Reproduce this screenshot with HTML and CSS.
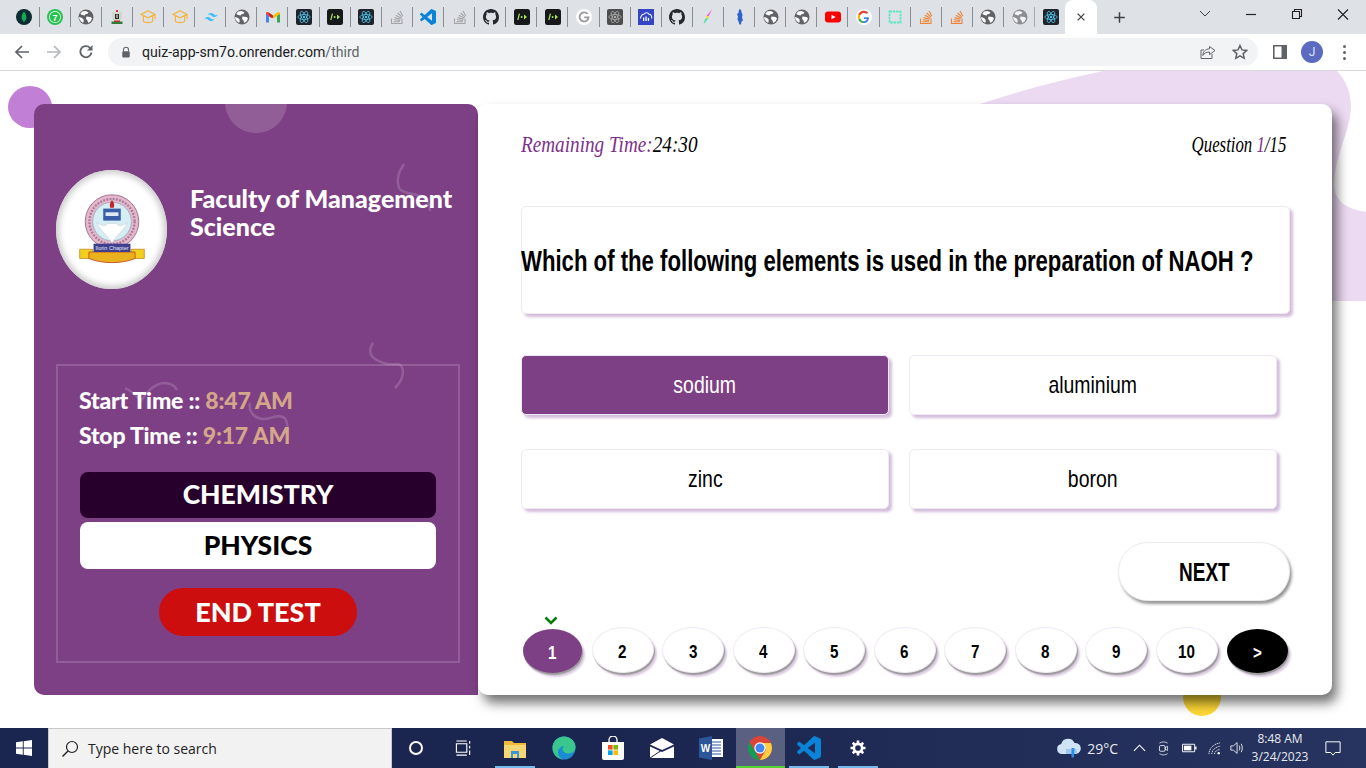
FILE: index.html
```html
<!DOCTYPE html>
<html lang="en">
<head>
<meta charset="utf-8">
<title>Quiz App</title>
<link rel="stylesheet" href="styles.css">
</head>
<body>
<svg class="defs" width="0" height="0" aria-hidden="true">
  <symbol id="i-mongo" viewBox="0 0 16 16"><circle cx="8" cy="8" r="8" fill="#0f2c33"/><path d="M8 2.500C6 5 5.400 7 5.600 9c.2 2 1.400 3 2.100 3.400l.3 1.600.3-1.600c.8-.4 2-1.500 2.100-3.500C10.500 7 10 5 8 2.500z" fill="#13aa52"/></symbol>
  <symbol id="i-globe" viewBox="0 0 16 16"><circle cx="8" cy="8" r="7.500" fill="#5f6368"/><path d="M4 2.600 7.500 2l3 1.200-1.200 1.700-2 .3-.6 1.300-2.400-.5L2.300 5zM8.400 7.600l4.100.4 1.500 1.200-1.300 3.100-2.500 1.700-.7-2.600-1.400-1.500zM1 8l2.500.7 2 1.500.2 3-1.500.2L1.500 10.500z" fill="#fff"/></symbol>
  <symbol id="i-arms" viewBox="0 0 16 16"><path d="M3 4c1-2 2.500-2 3-1l2 2 2-2c.5-1 2-1 3 1l-.5 6-2 2H5.500l-2-2z" fill="#cfd6c9"/><rect x="6" y="5" width="4" height="5" fill="#2d2d2d"/><path d="M7.500 5.500h1v3.500h-1z" fill="#fff"/><path d="M7 1h2v2H7z" fill="#c33"/><path d="M2.500 12.500h11V15h-11z" fill="#2f7d3a"/><path d="M5 11.500h6v1.500H5z" fill="#b53a2b"/></symbol>
  <symbol id="i-hat" viewBox="0 0 16 16"><path d="M8 1.700 15 5.400 8 8.900 1 5.400zM3.400 7v5.300c1.500 1.700 7.700 1.700 9.200 0V7M15 5.400V10" fill="none" stroke="#f5b43c" stroke-width="1.200"/></symbol>
  <symbol id="i-tw" viewBox="0 0 24 24"><path fill="#38bdf8" d="M12 6c-2.670 0-4.330 1.330-5 4 1-1.330 2.170-1.830 3.500-1.500.76.190 1.310.74 1.910 1.350.98 1 2.120 2.150 4.590 2.150 2.670 0 4.330-1.330 5-4-1 1.330-2.170 1.830-3.500 1.500-.76-.19-1.310-.74-1.910-1.350C15.610 7.150 14.470 6 12 6zm-5 6c-2.670 0-4.330 1.330-5 4 1-1.330 2.170-1.830 3.500-1.500.76.190 1.310.74 1.910 1.350C8.390 16.850 9.530 18 12 18c2.670 0 4.330-1.330 5-4-1 1.330-2.170 1.830-3.500 1.500-.76-.19-1.310-.74-1.910-1.350C10.610 13.150 9.470 12 7 12z"/></symbol>
  <symbol id="i-gmail" viewBox="0 0 16 16"><path d="M1 13.500V4l3 2.200v7.300z" fill="#4285f4"/><path d="M12 13.500V6.200L15 4v9.500z" fill="#34a853"/><path d="M1 4.500c0-1.700 1.500-2 2.500-1.200L8 6.700l-1.500 2.500L1 5z" fill="#ea4335"/><path d="M15 4.500c0-1.700-1.500-2-2.500-1.200L8 6.700 8 9.800l7-4.800z" fill="#fbbc04"/><path d="M4 6.200 8 9.200l0-2.500-4-3z" fill="#c5221f"/></symbol>
  <symbol id="i-react" viewBox="0 0 16 16"><rect width="16" height="16" rx="2" fill="#20232a"/><g fill="none" stroke="#4fc3e8" stroke-width=".8"><ellipse cx="8" cy="8" rx="6.200" ry="2.500"/><ellipse cx="8" cy="8" rx="6.200" ry="2.500" transform="rotate(60 8 8)"/><ellipse cx="8" cy="8" rx="6.200" ry="2.500" transform="rotate(120 8 8)"/></g><circle cx="8" cy="8" r="1.300" fill="#4fc3e8"/></symbol>
  <symbol id="i-react-grey" viewBox="0 0 16 16"><rect width="16" height="16" rx="2" fill="#4d4d4d"/><g fill="none" stroke="#a9a9a9" stroke-width=".8"><ellipse cx="8" cy="8" rx="6.200" ry="2.500"/><ellipse cx="8" cy="8" rx="6.200" ry="2.500" transform="rotate(60 8 8)"/><ellipse cx="8" cy="8" rx="6.200" ry="2.500" transform="rotate(120 8 8)"/></g><circle cx="8" cy="8" r="1.300" fill="#a9a9a9"/></symbol>
  <symbol id="i-cmd" viewBox="0 0 16 16"><rect width="16" height="16" rx="2.500" fill="#17181a"/><path d="M5.400 4.700 3.800 11" fill="none" stroke="#a6e35a" stroke-width="1.200"/><circle cx="7.600" cy="8" r="1" fill="#a6e35a"/><path d="M10 5.500 13 8l-3 2.500z" fill="#a6e35a"/></symbol>
  <symbol id="i-stack" viewBox="0 0 16 16"><path d="M2.500 9.500V14.500H13V9.500" fill="none" stroke="currentColor" stroke-width="1.100"/><path d="M4.500 12.800h6.500M4.800 10.800l6.300.7M5.500 8.600l6 1.700M6.800 6.200l5.400 3M8.700 4l4.300 4.200M11 2l2.800 5" fill="none" stroke="currentColor" stroke-width="1.100"/></symbol>
  <symbol id="i-code" viewBox="0 0 24 24"><path fill="#0a84d6" d="M23.150 2.587 18.210.21a1.494 1.494 0 0 0-1.705.29l-9.460 8.630-4.120-3.128a.999.999 0 0 0-1.276.057L.327 7.261A1 1 0 0 0 .326 8.740L3.899 12 .326 15.260a1 1 0 0 0 .001 1.479L1.650 17.940a.999.999 0 0 0 1.276.057l4.120-3.128 9.460 8.630a1.492 1.492 0 0 0 1.704.29l4.942-2.377A1.500 1.500 0 0 0 24 20.060V3.939a1.500 1.500 0 0 0-.85-1.352zm-5.146 14.861L10.826 12l7.178-5.448v10.896z"/></symbol>
  <symbol id="i-gh" viewBox="0 0 16 16"><path fill="#24292f" d="M8 0C3.580 0 0 3.580 0 8c0 3.540 2.290 6.530 5.470 7.590.4.070.55-.17.55-.38 0-.19-.01-.82-.01-1.490-2.010.37-2.530-.49-2.690-.94-.09-.23-.48-.94-.82-1.130-.28-.15-.68-.52-.01-.53.63-.01 1.080.58 1.230.82.720 1.210 1.870.87 2.330.66.070-.52.280-.87.510-1.070-1.780-.2-3.640-.89-3.640-3.950 0-.87.310-1.590.820-2.150-.08-.2-.36-1.020.08-2.120 0 0 .67-.21 2.200.82.640-.18 1.320-.27 2-.27.68 0 1.360.09 2 .27 1.530-1.040 2.200-.82 2.200-.82.44 1.100.16 1.920.08 2.120.51.560.82 1.270.82 2.150 0 3.070-1.870 3.750-3.650 3.950.29.25.54.73.54 1.480 0 1.070-.01 1.930-.01 2.200 0 .21.15.46.55.38A8.013 8.013 0 0 0 16 8c0-4.420-3.580-8-8-8z"/></symbol>
  <symbol id="i-g-grey" viewBox="0 0 16 16"><circle cx="8" cy="8" r="8" fill="#fff"/><path d="M11.600 5a4.500 4.500 0 1 0 1 3.300H8.200" fill="none" stroke="#9a9a9a" stroke-width="1.800"/></symbol>
  <symbol id="i-cloud" viewBox="0 0 16 16"><rect width="16" height="16" fill="#3346c5"/><path d="M2.500 9.500C2.500 6.500 5 5 6.200 5 7 3.500 10 3.200 11 5.200c1.600 0 3 1.500 2.700 4.300" fill="none" stroke="#fff" stroke-width="1.100"/><path d="M5 8.500h1.300V12H5zM7.400 7.500h1.300V12H7.400zM9.800 9h1.300v3H9.800z" fill="#fff"/></symbol>
  <symbol id="i-bolt" viewBox="0 0 16 16"><path d="M12 .5 6.500 7l2 .5z" fill="#e85bd8"/><path d="M6.500 7 5 10l3.500-1 .3-1.800z" fill="#f4e04a"/><path d="M8.500 9 3.500 15.500 5 10z" fill="#43e0b0"/></symbol>
  <symbol id="i-blue" viewBox="0 0 16 16"><path d="M7 .5h2l.5 3 1 2-.5 3 1 3-1.500 1-.5 3H7.500l-1-3-1-2 .5-3-1-2.500 1.500-1z" fill="#2f62c9"/></symbol>
  <symbol id="i-yt" viewBox="0 0 16 16"><rect y="2.500" width="16" height="11" rx="3" fill="#f00"/><path d="M6.500 5.700 10.700 8l-4.200 2.300z" fill="#fff"/></symbol>
  <symbol id="i-google" viewBox="0 0 16 16"><circle cx="8" cy="8" r="8" fill="#fff"/><path d="M12.800 8.200H8v1.900h2.800c-.3 1.300-1.400 2.100-2.800 2.100V14c2.900 0 4.900-2.100 4.900-5z" fill="#4285f4"/><path d="M8 12.200a4.200 4.200 0 0 1-3.900-2.800L2.300 10.800A6 6 0 0 0 8 14z" fill="#34a853"/><path d="M4.100 9.400a4.200 4.200 0 0 1 0-2.800L2.300 5.200a6 6 0 0 0 0 5.600z" fill="#fbbc04"/><path d="M4.100 6.600A4.200 4.200 0 0 1 10.800 5l1.400-1.400A6 6 0 0 0 2.300 5.200z" fill="#ea4335"/></symbol>
  <symbol id="i-teal" viewBox="0 0 16 16"><rect x="2.500" y="2.500" width="11" height="11" fill="none" stroke="#5ce6c4" stroke-width="1.800" stroke-dasharray="2.500 .8"/></symbol>
  <symbol id="i-x" viewBox="0 0 16 16"><path d="M3.500 3.500l9 9m0-9-9 9" fill="none" stroke="#3c4043" stroke-width="1.700"/></symbol>
</svg>

<header class="chrome">
  <div class="tabstrip">
    <div class="tabs">
      <span class="tab"><svg class="ti"><use href="#i-mongo"/></svg></span>
      <span class="tab"><svg class="ti" viewBox="0 0 16 16"><circle cx="8" cy="8" r="8" fill="#25c24f"/><circle cx="8" cy="8" r="6" fill="#fff"/><circle cx="8" cy="8" r="5.200" fill="#25c24f"/><text x="8" y="11.800" text-anchor="middle" class="svg-seven">7</text></svg></span>
      <span class="tab"><svg class="ti"><use href="#i-globe"/></svg></span>
      <span class="tab"><svg class="ti"><use href="#i-arms"/></svg></span>
      <span class="tab"><svg class="ti"><use href="#i-hat"/></svg></span>
      <span class="tab"><svg class="ti"><use href="#i-hat"/></svg></span>
      <span class="tab"><svg class="ti"><use href="#i-tw"/></svg></span>
      <span class="tab"><svg class="ti"><use href="#i-globe"/></svg></span>
      <span class="tab"><svg class="ti"><use href="#i-gmail"/></svg></span>
      <span class="tab"><svg class="ti"><use href="#i-react"/></svg></span>
      <span class="tab"><svg class="ti"><use href="#i-cmd"/></svg></span>
      <span class="tab"><svg class="ti"><use href="#i-react"/></svg></span>
      <span class="tab grey-ico"><svg class="ti"><use href="#i-stack"/></svg></span>
      <span class="tab"><svg class="ti"><use href="#i-code"/></svg></span>
      <span class="tab grey-ico"><svg class="ti"><use href="#i-stack"/></svg></span>
      <span class="tab"><svg class="ti"><use href="#i-gh"/></svg></span>
      <span class="tab"><svg class="ti"><use href="#i-cmd"/></svg></span>
      <span class="tab"><svg class="ti"><use href="#i-cmd"/></svg></span>
      <span class="tab"><svg class="ti"><use href="#i-g-grey"/></svg></span>
      <span class="tab"><svg class="ti"><use href="#i-react-grey"/></svg></span>
      <span class="tab"><svg class="ti"><use href="#i-cloud"/></svg></span>
      <span class="tab"><svg class="ti"><use href="#i-gh"/></svg></span>
      <span class="tab"><svg class="ti"><use href="#i-bolt"/></svg></span>
      <span class="tab"><svg class="ti"><use href="#i-blue"/></svg></span>
      <span class="tab"><svg class="ti"><use href="#i-globe"/></svg></span>
      <span class="tab"><svg class="ti"><use href="#i-globe"/></svg></span>
      <span class="tab"><svg class="ti"><use href="#i-yt"/></svg></span>
      <span class="tab"><svg class="ti"><use href="#i-google"/></svg></span>
      <span class="tab"><svg class="ti"><use href="#i-teal"/></svg></span>
      <span class="tab orange-ico"><svg class="ti"><use href="#i-stack"/></svg></span>
      <span class="tab orange-ico"><svg class="ti"><use href="#i-stack"/></svg></span>
      <span class="tab"><svg class="ti"><use href="#i-globe"/></svg></span>
      <span class="tab faded"><svg class="ti"><use href="#i-globe"/></svg></span>
      <span class="tab last"><svg class="ti"><use href="#i-react"/></svg></span>
      <span class="tab-active"><svg class="ti"><use href="#i-x"/></svg></span>
      <span class="tab-new"><svg class="ti" viewBox="0 0 16 16"><path d="M8 1.500v13M1.500 8h13" fill="none" stroke="#3c4043" stroke-width="1.800"/></svg></span>
    </div>
    <div class="winctl">
      <svg class="wc" viewBox="0 0 46 34"><path d="M18 11l5 5 5-5" fill="none" stroke="#3c4043" stroke-width="1"/></svg>
      <svg class="wc" viewBox="0 0 46 34"><path d="M18 14.500h10" stroke="#202124" stroke-width="1.200"/></svg>
      <svg class="wc" viewBox="0 0 46 34"><path d="M18.500 11.500h7v7h-7zM20.500 11.500v-2h7v7h-2" fill="none" stroke="#202124" stroke-width="1.100"/></svg>
      <svg class="wc" viewBox="0 0 46 34"><path d="M18 9.500l10 10m0-10-10 10" fill="none" stroke="#202124" stroke-width="1.100"/></svg>
    </div>
  </div>
  <div class="toolbar">
    <svg class="nav nav-back" viewBox="0 0 16 16"><path d="M15 8H2M8 2 2 8l6 6" fill="none" stroke="#5f6368" stroke-width="1.700"/></svg>
    <svg class="nav nav-fwd" viewBox="0 0 16 16"><path d="M1 8h13M8 2l6 6-6 6" fill="none" stroke="#b4b7bb" stroke-width="1.700"/></svg>
    <svg class="nav nav-reload" viewBox="0 0 16 16"><path d="M13.500 8.500A5.600 5.600 0 1 1 12 3.800" fill="none" stroke="#5f6368" stroke-width="1.800"/><path d="M14.500 1v5.500H9z" fill="#5f6368"/></svg>
    <div class="omnibox">
      <svg class="lock" viewBox="0 0 12 14"><path d="M3 6V4.200a3 3 0 0 1 6 0V6" fill="none" stroke="#5f6368" stroke-width="1.300"/><rect x="1.500" y="6" width="9" height="7.500" rx="1" fill="#5f6368"/></svg>
      <span class="url">quiz-app-sm7o.onrender.com<span class="url-path">/third</span></span>
      <svg class="omni-ico share" viewBox="0 0 16 16"><path d="M9.500 2.500 15 6.500l-5.500 4V8C6 8 4 9.500 2.800 11.500 3 7.500 5.500 5 9.500 4.800zM12 10v4.500H1V6h3" fill="none" stroke="#5f6368" stroke-width="1"/></svg>
      <svg class="omni-ico star" viewBox="0 0 16 16"><path d="M8 1.500l2 4.400 4.800.5-3.600 3.200 1 4.700L8 11.900l-4.200 2.400 1-4.700L1.200 6.400 6 5.900z" fill="none" stroke="#5f6368" stroke-width="1.500"/></svg>
    </div>
    <div class="tb-right">
      <svg class="side" viewBox="0 0 14 14"><path d="M.8.800h12.400v12.400H.8z" fill="#fff" stroke="#5f6368" stroke-width="1.600"/><path d="M8.500 1h5v12h-5z" fill="#5f6368"/></svg>
      <span class="avatar">J</span>
      <span class="dots"><i></i><i></i><i></i></span>
    </div>
  </div>
</header>

<main class="page">
  <svg class="blob" viewBox="0 0 400 230" aria-hidden="true"><path d="M0 33C40 20 80 9 123 0H357C369 12 373 30 370 45 367 65 354 90 354 114 355 130 366 141 400 142V230H0z" fill="#ecd9f2"/></svg>
  <span class="dot-purple"></span>
  <span class="dot-yellow"></span>

  <section class="side-panel">
    <span class="bubble"></span>
    <svg class="squiggles" viewBox="0 0 444 591" aria-hidden="true">
      <path d="M370 60c-5 7-8 16-5 24 3 6 16 5 23 9 6 3 8 9 8 14"/>
      <path d="M339 239c-4 6-4 12 2 16 6 4 14 6 22 5 6 0 7 8 5 13-1 4-4 8-7 11"/>
      <path d="M91 284c6 3 12 8 17 14M108 296c4-8 12-16 22-17 6 0 11 3 13 7"/>
      <path d="M216 299c-2 8 4 15 12 16 7 1 14-5 21-2 5 2 5 14 4 23"/>
    </svg>
    <div class="brand">
      <div class="logo">
        <svg class="emblem" viewBox="0 0 78 88" aria-hidden="true">
          <circle cx="39" cy="37" r="29" fill="#e6b8cc" stroke="#9a6d8e" stroke-width="1"/>
          <circle cx="39" cy="37" r="24.500" fill="none" stroke="#a57a98" stroke-width="2.500" stroke-dasharray="2 1.500"/>
          <circle cx="39" cy="37" r="21" fill="#d5eef4" stroke="#8fa6b8" stroke-width=".8"/>
          <path d="M22 38c4 8 10 12 17 22 7-10 13-14 17-22-5 3-10 5-12 1h-10c-2 4-7 2-12-1z" fill="#fff" stroke="#c9c6d6" stroke-width=".6"/>
          <path d="M39 14c-3 3-2.500 6-2 8h4c.5-2 1-5-2-8z" fill="#c8242b"/>
          <rect x="29.500" y="23" width="19" height="13" fill="#3a5da8"/>
          <rect x="32" y="27" width="14" height="4" fill="#dfe8f5"/>
          <path d="M4 67h14v10H4zM60 67h14v10H60z" fill="#f3cf1e" stroke="#b8861b" stroke-width=".8"/>
          <path d="M14 70h50v7c-14 6-36 6-50 0z" fill="#e9b11d" stroke="#c6531f" stroke-width="1"/>
          <rect x="19" y="61" width="40" height="9" fill="#3e3f8f"/>
          <text x="39" y="68" text-anchor="middle" class="svg-chapter">Ilorin Chapter</text>
        </svg>
      </div>
      <h1 class="faculty">Faculty of Management Science</h1>
    </div>
    <div class="exam-box">
      <p class="time">Start Time :: <span class="time-val">8:47 AM</span></p>
      <p class="time">Stop Time :: <span class="time-val">9:17 AM</span></p>
      <div class="subjects">
        <button class="subject subject-on">CHEMISTRY</button>
        <button class="subject subject-off">PHYSICS</button>
      </div>
      <button class="end">END TEST</button>
    </div>
  </section>

  <section class="quiz">
    <div class="quiz-top">
      <span class="remaining">Remaining Time:<span class="ink">24:30</span></span>
      <span class="counter">Question <span class="count-now">1</span>/15</span>
    </div>
    <div class="question"><span class="narrow">Which of the following elements is used in the preparation of NAOH ?</span></div>
    <div class="options">
      <button class="option option-on"><span class="narrow">sodium</span></button>
      <button class="option"><span class="narrow">aluminium</span></button>
      <button class="option"><span class="narrow">zinc</span></button>
      <button class="option"><span class="narrow">boron</span></button>
    </div>
    <div class="next-row"><button class="next"><span class="narrow">NEXT</span></button></div>
    <div class="pager">
      <button class="pg pg-on"><svg class="tick" viewBox="0 0 14 10"><path d="M1.500 1.500 7 7l5.500-5.500" fill="none" stroke="#0a7d0a" stroke-width="2.600"/></svg><span class="narrow">1</span></button>
      <button class="pg"><span class="narrow">2</span></button>
      <button class="pg"><span class="narrow">3</span></button>
      <button class="pg"><span class="narrow">4</span></button>
      <button class="pg"><span class="narrow">5</span></button>
      <button class="pg"><span class="narrow">6</span></button>
      <button class="pg"><span class="narrow">7</span></button>
      <button class="pg"><span class="narrow">8</span></button>
      <button class="pg"><span class="narrow">9</span></button>
      <button class="pg"><span class="narrow">10</span></button>
      <button class="pg pg-more"><span class="narrow">&gt;</span></button>
    </div>
  </section>
</main>

<footer class="taskbar">
  <span class="start"><svg class="win" viewBox="0 0 16 16"><path d="M0 2.300 6.800 1.300V7.600H0zM7.700 1.200 16 0V7.600H7.700zM0 8.400H6.800V14.700L0 13.700zM7.700 8.400H16V16L7.700 14.800z" fill="#fff"/></svg></span>
  <div class="search">
    <svg class="glass" viewBox="0 0 18 18"><circle cx="11" cy="7" r="5.500" fill="none" stroke="#222" stroke-width="1.200"/><path d="M7 11 1.500 16.500" stroke="#222" stroke-width="1.400"/></svg>
    <span>Type here to search</span>
  </div>
  <span class="tk tk-cortana"><i class="ring"></i></span>
  <span class="tk tk-view"><svg class="tk-ico" viewBox="0 0 18 18"><path d="M1.500 4h11v9h-11zM1.500 1h11M1.500 16h11M15.500 1v3M15.500 6v3M15.500 11v5" fill="none" stroke="#fff" stroke-width="1.200"/></svg></span>
  <span class="tk tk-app tk-run tk-first"><svg class="app-ico" viewBox="0 0 24 24"><path d="M1 5h8l2 2h12v15H1z" fill="#f0b93a"/><path d="M1 9h22v13H1z" fill="#f7d774"/><path d="M8 15h8v7h-2v-4h-4v4H8z" fill="#3a96dd"/></svg></span>
  <span class="tk tk-app"><svg class="app-ico" viewBox="0 0 24 24"><circle cx="12" cy="12" r="11.500" fill="#1b8ad1"/><path d="M12 .5C18 .5 23.500 5 23.500 11c0 4.500-4 6.500-7 6.500-3 0-6-2-6-4.500 0-1.500 1-2.500 2-3-4 .2-6.500 3-6.500 6.500 0 3.500 2.500 6 5.500 7C5 22.500.5 18 .5 12 .5 5.500 5.500.5 12 .5z" fill="#39c78e"/></svg></span>
  <span class="tk tk-app"><svg class="app-ico" viewBox="0 0 24 24"><path d="M1 6h22v16a2 2 0 0 1-2 2H3a2 2 0 0 1-2-2z" fill="#fff"/><path d="M8 7V4a4 4 0 0 1 8 0v3" fill="none" stroke="#fff" stroke-width="1.300"/><rect x="7" y="9" width="4.600" height="4.600" fill="#f25022"/><rect x="12.400" y="9" width="4.600" height="4.600" fill="#7fba00"/><rect x="7" y="14.400" width="4.600" height="4.600" fill="#00a4ef"/><rect x="12.400" y="14.400" width="4.600" height="4.600" fill="#ffb900"/></svg></span>
  <span class="tk tk-app"><svg class="app-ico" viewBox="0 0 24 24"><path d="M0 8.500 12 2l12 6.500L12 14z" fill="#fff"/><path d="M0 10.500 12 16l12-5.500V22H0z" fill="#fff"/><path d="M0 22 12 14" stroke="#1b2650" stroke-width="1"/></svg></span>
  <span class="tk tk-app"><svg class="app-ico" viewBox="0 0 24 24"><path d="M9 3h15v18H9z" fill="#fff"/><path d="M13 6h9M13 9h9M13 12h9M13 15h9M13 18h9" stroke="#2b579a" stroke-width="1.200"/><path d="M0 2.500 13 0v24L0 21.500z" fill="#2b579a"/><text x="6.500" y="15.500" text-anchor="middle" class="svg-word">W</text></svg></span>
  <span class="tk tk-app tk-active"><svg class="app-ico" viewBox="0 0 24 24"><circle cx="12" cy="12" r="12" fill="#db4437"/><path d="M12 24A12 12 0 0 1 1.600 6L7 15.500 12 24z" fill="#0f9d58"/><path d="M12 24 18 13.500 12 7h10.900A12 12 0 0 1 12 24z" fill="#ffcd40"/><circle cx="12" cy="12" r="5.700" fill="#fff"/><circle cx="12" cy="12" r="4.500" fill="#4285f4"/></svg></span>
  <span class="tk tk-app tk-run"><svg class="app-ico" viewBox="0 0 24 24"><use href="#i-code"/></svg></span>
  <span class="tk tk-app tk-run"><svg class="app-ico gear" viewBox="0 0 24 24"><circle cx="12" cy="12" r="5.500" fill="none" stroke="#fff" stroke-width="3.500"/><path d="M12 2v5M12 17v5M2 12h5M17 12h5M5 5l3.500 3.500M15.500 15.500 19 19M19 5l-3.500 3.500M8.500 15.500 5 19" stroke="#fff" stroke-width="3.600"/></svg></span>
  <div class="tray">
    <svg class="weather" viewBox="0 0 26 24"><path d="M6 18a5 5 0 0 1-.8-9.900A7 7 0 0 1 18.500 7 5.500 5.500 0 0 1 20 18z" fill="#cfe3f7"/><path d="M10 13h10a4 4 0 0 1 0 5H10z" fill="#9fc7ee"/><path d="M15.500 12h3l-.5 9a2 2 0 0 1-2.500 0z" fill="#2f8de4"/></svg>
    <span class="temp">29°C</span>
    <svg class="chev" viewBox="0 0 14 8"><path d="M1 7l6-6 6 6" fill="none" stroke="#fff" stroke-width="1.200"/></svg>
    <svg class="sys sys-meet" viewBox="0 0 16 18"><rect x="3" y="6" width="7" height="7" rx="1.500" fill="none" stroke="#fff"/><path d="M10 8.500l3-1.500v5l-3-1.500zM3 3c3-2 7-2 10 0M3 16c3 2 7 2 10 0" fill="none" stroke="#fff" stroke-width=".9"/></svg>
    <svg class="sys sys-batt" viewBox="0 0 16 10"><path d="M.5 1h13v8H.5z" fill="none" stroke="#fff"/><path d="M2 2.500h8v5H2z" fill="#fff"/><path d="M14 3.500h1.500v3H14z" fill="#fff"/></svg>
    <svg class="sys sys-wifi" viewBox="0 0 16 14"><path d="M1 13C1 7 6 2 13 1M4 13c0-4 3.500-7.500 9-8.500M7 13c0-2.500 2.500-4.500 6-5" fill="none" stroke="#fff" stroke-width=".9" stroke-dasharray="1.400 .7"/><circle cx="11.500" cy="12" r="1.300" fill="#fff"/></svg>
    <svg class="sys sys-vol" viewBox="0 0 18 16"><path d="M1 5.500h3L8.500 1.500v13L4 10.500H1z" fill="none" stroke="#fff"/><path d="M11 5c1 2 1 4 0 6M13.500 3c1.600 3 1.600 7 0 10" fill="none" stroke="#fff"/></svg>
    <div class="clock"><span>8:48 AM</span><span>3/24/2023</span></div>
    <svg class="notif" viewBox="0 0 18 18"><path d="M1 1.500h16v12h-5.500L9 16.500 6.500 13.500H1z" fill="none" stroke="#fff" stroke-width="1.100"/></svg>
  </div>
</footer>
</body>
</html>
```

FILE: styles.css
```css
* { box-sizing: border-box; }
html, body { margin: 0; padding: 0; }
body {
  width: 1366px;
  height: 768px;
  overflow: hidden;
  display: flex;
  flex-direction: column;
  font-family: "Lato", "Liberation Sans", sans-serif;
  background: #fff;
}
.defs { position: absolute; }
button { font: inherit; cursor: pointer; }
.svg-seven { font: 700 9px "Liberation Sans", sans-serif; fill: #fff; }
.svg-word { font: 700 10px "Liberation Sans", sans-serif; fill: #fff; }
.svg-chapter { font: 6px "Liberation Sans", sans-serif; fill: #e8e8f5; }

/* browser chrome */
.chrome { flex: 0 0 71px; display: flex; flex-direction: column; }
.tabstrip { height: 34px; background: #dee1e6; display: flex; justify-content: space-between; }
.tabs { display: flex; padding-left: 8.5px; }
.tab {
  width: 31.12px; height: 34px;
  display: flex; align-items: center; justify-content: center;
  position: relative;
  color: #9b9d9f;
}
.tab::after {
  content: ""; position: absolute; right: 0; top: 7px;
  width: 1px; height: 20px; background: #8a8d91;
}
.tab.last::after { display: none; }
.ti { width: 16px; height: 16px; display: block; }
.orange-ico { color: #ef8236; }
.grey-ico { color: #a4a5a7; }
.faded { opacity: .65; }
.tab-active {
  width: 32px; height: 34px; margin-left: -1px;
  background: #fff; border-radius: 8px 8px 0 0;
  display: flex; align-items: center; justify-content: center;
  position: relative;
}
.tab-active .ti { width: 12px; height: 12px; }
.tab-new { width: 44px; display: flex; align-items: center; justify-content: center; }
.tab-new .ti { width: 13px; height: 13px; }
.winctl { display: flex; }
.wc { width: 46px; height: 34px; display: block; }

.toolbar {
  height: 37px; background: #fff;
  border-bottom: 1px solid #d9dadc;
  display: flex; align-items: center;
  padding: 0 0 0 14px;
}
.nav { width: 16px; height: 16px; flex: none; }
.nav-fwd { margin-left: 16px; }
.nav-reload { margin-left: 16px; }
.omnibox {
  width: 1150px; height: 28px; margin-left: 14px;
  background: #f1f3f4; border-radius: 14px;
  display: flex; align-items: center;
  padding-left: 13px; padding-right: 10px;
}
.lock { width: 10px; height: 12px; flex: none; }
.url {
  margin-left: 11px;
  font: 14.1px/28px "Roboto", "Liberation Sans", sans-serif;
  color: #202124;
  flex: 1;
}
.url-path { color: #5f6368; }
.omni-ico { width: 16px; height: 16px; flex: none; }
.star { margin-left: 16px; }
.tb-right { display: flex; align-items: center; margin-left: 15px; }
.side { width: 14px; height: 14px; }
.avatar {
  width: 22px; height: 22px; margin-left: 14px; border-radius: 50%;
  background: #5c6bc0; color: #dfe3f5;
  font: 12px/22px "Roboto", sans-serif; text-align: center;
}
.dots { display: flex; flex-direction: column; gap: 3px; margin-left: 20px; width: 3px; }
.dots i { width: 3px; height: 3px; border-radius: 50%; background: #5f6368; }

/* page */
.page {
  flex: 0 0 657px;
  position: relative;
  overflow: hidden;
  display: flex;
  align-items: flex-start;
  padding: 33px 0 0 34px;
  background: #fff;
}
.blob { position: absolute; left: 980px; top: 0; width: 400px; height: 230px; }
.dot-purple {
  position: absolute; left: 8px; top: 15px; width: 44px; height: 42px;
  border-radius: 50%; background: #c17fd5;
}
.dot-yellow {
  position: absolute; left: 1183px; top: 607px; width: 38px; height: 38px;
  border-radius: 50%; background: #fdd835;
}

.side-panel {
  position: relative;
  width: 444px; height: 591px;
  flex: none;
  background: #7e4085;
  border-radius: 10px 10px 0 10px;
  overflow: hidden;
  padding: 66px 18px 32px 22px;
  color: #fff;
}
.bubble {
  position: absolute; left: 191px; top: -33px;
  width: 62px; height: 62px; border-radius: 50%;
  background: rgba(255, 255, 255, .16);
}
.squiggles {
  position: absolute; left: 0; top: 0; width: 444px; height: 591px;
  fill: none; stroke: rgba(255, 255, 255, .16); stroke-width: 2.500;
}
.brand { display: flex; align-items: flex-start; position: relative; height: 194px; }
.logo {
  width: 111px; height: 119px; flex: none;
  border-radius: 50%;
  background: #fff;
  box-shadow: inset 0 0 6px 3px #c9c9c9;
  display: flex; align-items: center; justify-content: center;
  padding-bottom: 3px;
}
.emblem { width: 72px; height: 82px; }
.faculty {
  margin: 14px 0 0 23px;
  font-size: 25px; line-height: 28px; font-weight: 900;
}
.exam-box {
  position: relative;
  width: 404px; height: 299px;
  border: 2px solid rgba(255, 255, 255, .16);
  padding: 17px 22px 0 22px;
}
.time { margin: 0 0 0 -1px; font-size: 23px; font-weight: 900; line-height: 35px; letter-spacing: -.2px; }
.time-val { color: #d4a78a; }
.subjects { display: flex; flex-direction: column; gap: 4px; margin-top: 19px; }
.subject {
  height: 46px; border: 0; border-radius: 8px;
  padding: 0 0 2px;
  background: #fff; color: #000;
  font-family: "Lato", sans-serif;
  font-size: 26.5px; font-weight: 900; line-height: 44px;
}
.subject-off { height: 47px; }
.subject-on { background: #27002b; color: #fff; }
.end {
  display: block; margin: 19px auto 0;
  width: 198px; height: 48px; border: 0; border-radius: 24px;
  padding: 0 0 2px;
  background: #cc0e0e; color: #fff;
  font-family: "Lato", sans-serif;
  font-size: 27px; font-weight: 900;
}

.quiz {
  position: relative;
  width: 854px; height: 591px;
  flex: none;
  background: #fff;
  border-radius: 10px;
  box-shadow: 5px 8px 12px rgba(0, 0, 0, .55);
  padding: 0 42px 0 43px;
}
.narrow { display: inline-block; white-space: nowrap; }
.quiz-top {
  height: 102px; padding-top: 24px;
  display: flex; justify-content: space-between; align-items: flex-start;
  font: italic 24px/32px "Liberation Serif", serif;
  padding-right: 4px;
}
.remaining { display: inline-block; color: #7e2f8c; transform: scaleX(.8); transform-origin: left center; white-space: nowrap; }
.ink { color: #000; }
.counter { display: inline-block; color: #000; transform: scaleX(.7); transform-origin: right center; white-space: nowrap; }
.count-now { color: #7e2f8c; }
.question {
  height: 108px;
  border: 1px solid #efe9f3;
  border-radius: 5px;
  box-shadow: 3px 3px 3px #d3bcdb;
  display: flex; align-items: center;
  padding-top: 2px;
  font: 700 29px/1 "Liberation Sans", sans-serif;
  color: #000;
  background: #fff;
}
.question .narrow { transform: scaleX(.764); transform-origin: left center; margin-left: -1px; }
.options {
  display: grid;
  grid-template-columns: 368px 368px;
  column-gap: 20px; row-gap: 34px;
  margin-top: 41px;
}
.option {
  height: 60px;
  border: 1px solid #efe9f3;
  border-radius: 5px;
  background: #fff; color: #000;
  box-shadow: 3px 3px 3px #d3bcdb;
  font: 24px/1 "Liberation Sans", sans-serif;
}
.option .narrow { transform: scaleX(.81); }
.option-on { background: #7e4085; color: #fff; }
.next-row { display: flex; justify-content: flex-end; margin-top: 33px; }
.next {
  width: 172px; height: 59px;
  border: 1px solid #ececec; border-radius: 30px;
  background: #fff; color: #000;
  box-shadow: 2px 3px 3px #9a9a9a;
  font: 700 25px/1 "Liberation Sans", sans-serif;
  padding-top: 2px;
}
.next .narrow { transform: scaleX(.76); }
.pager {
  display: flex; margin-top: 26px; padding-left: 2px;
  align-items: flex-start;
  gap: 8.500px;
}
.pg {
  position: relative;
  width: 62px; height: 46px; flex: none;
  padding: 3px 0 0;
  border: 1px solid #f1eaf4; border-radius: 50%;
  background: #fff; color: #000;
  box-shadow: 1px 2px 1px #9a9a9a, 3px 4px 2px #dccbe2;
  font: 700 19px/1 "Liberation Sans", sans-serif;
}
.pg .narrow { transform: scaleX(.8); }
.pg-on {
  width: 59px; height: 44px; margin: 2px 1px 0 0;
  background: #7e4085; color: #fff; border: 0;
}
.pg-more { background: #000; color: #fff; width: 61px; height: 44px; margin: 2px 0 0 1px; border: 0; }
.tick { position: absolute; left: 21px; top: -13px; width: 14px; height: 10px; }

/* taskbar */
.taskbar {
  flex: 0 0 40px;
  background: linear-gradient(90deg, #1b2650 0%, #1b2650 45%, #27345f 100%);
  display: flex; align-items: stretch;
  color: #fff;
}
.start { width: 48px; display: flex; align-items: center; justify-content: center; }
.win { width: 16px; height: 16px; }
.search {
  width: 344px;
  background: #f2f2f2;
  border: 1px solid #c6c8cc; border-bottom: 0;
  display: flex; align-items: center;
  padding-left: 12px;
  color: #222;
  font: 14px "Open Sans", sans-serif;
}
.glass { width: 18px; height: 18px; margin-right: 9px; }
.tk { display: flex; align-items: center; justify-content: center; position: relative; flex: none; }
.tk-cortana { width: 48px; }
.ring { width: 14px; height: 14px; border: 2px solid #fff; border-radius: 50%; display: block; }
.tk-view { width: 46px; }
.tk-ico { width: 17px; height: 17px; }
.tk-app { width: 49px; }
.tk-first { margin-left: 4.5px; }
.app-ico { width: 24px; height: 24px; display: block; }
.gear { width: 18px; height: 18px; }
.tk-run::after {
  content: ""; position: absolute; left: 4.5px; right: 4.5px; bottom: 0;
  height: 2px; background: #76b9ed;
}
.tk-active { background: #5a6180; }
.tk-active::after {
  content: ""; position: absolute; left: 0; right: 0; bottom: 0;
  height: 2px; background: #55d132;
}
.tray { margin-left: auto; display: flex; align-items: center; font: 14px "Open Sans", sans-serif; }
.weather { width: 26px; height: 24px; }
.temp { margin-left: 5px; font-size: 14px; color: #e8eaf0; }
.chev { width: 13px; height: 8px; margin-left: 15px; }
.sys { display: block; }
.sys-meet { width: 13px; height: 16px; margin-left: 11px; }
.sys-batt { width: 15px; height: 10px; margin-left: 12px; }
.sys-wifi { width: 15px; height: 13px; margin-left: 11px; }
.sys-vol { width: 15px; height: 14px; margin-left: 7px; }
.clock {
  display: flex; flex-direction: column; align-items: center;
  margin-left: 4px; width: 62px;
  font-size: 12px; line-height: 18px; color: #e8eaf0;
}
.notif { width: 16px; height: 17px; margin: 0 25px 0 14px; }
```
